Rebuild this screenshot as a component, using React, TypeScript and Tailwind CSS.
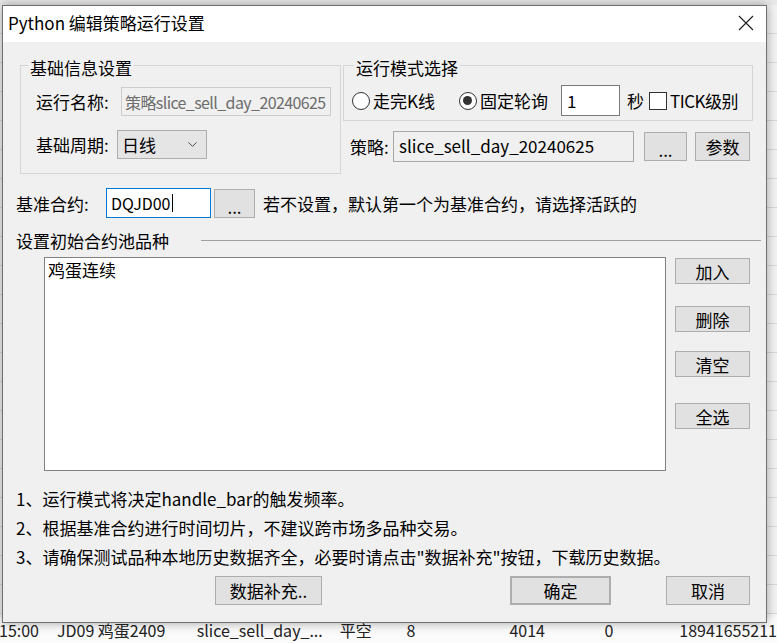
import React from "react";
import { ChevronDown } from "lucide-react";

const Btn = ({ children, className = "" }: { children: React.ReactNode; className?: string }) => (
  <div
    className={`flex shrink-0 items-center justify-center border border-[#adadad] bg-[#e1e1e1] text-[17px] leading-none text-black ${className}`}
  >
    {children}
  </div>
);

const Radio = ({ checked }: { checked?: boolean }) => (
  <span className="flex h-[18px] w-[18px] shrink-0 items-center justify-center rounded-full border border-[#333] bg-white">
    {checked && <span className="h-[9px] w-[9px] rounded-full bg-[#333]" />}
  </span>
);

const rows = Array.from({ length: 21 });

const App = () => {
  return (
    <div className="relative h-[643px] w-[777px] overflow-hidden bg-[#f7f7f7] font-['Noto_Sans_CJK_SC','Noto_Sans',sans-serif] text-black">
      {/* table behind the dialog */}
      <div className="flex h-full flex-col">
        <div className="h-[5px] shrink-0 bg-[#e9e9e9]" />
        {rows.map((_, i) => (
          <div key={i} className="h-[29px] shrink-0 border-b border-[#d9d9d9] bg-[#f3f3f3]" />
        ))}
        <div className="flex-1" />
        <div className="flex h-[26px] shrink-0 items-center whitespace-nowrap bg-[#fbfbfb] text-[16px] leading-none text-[#222]">
          <span className="ml-[-1px] w-[58px]">15:00</span>
          <span className="w-[140px]">JD09 鸡蛋2409</span>
          <span className="w-[143px]">slice_sell_day_...</span>
          <span className="w-[67px]">平空</span>
          <span className="w-[103px]">8</span>
          <span className="w-[95px]">4014</span>
          <span className="w-[75px]">0</span>
          <span>18941655211</span>
        </div>
      </div>

      {/* dialog */}
      <div className="absolute left-[2px] top-[5px] flex h-[618px] w-[765px] flex-col border border-[#6f6f6f] bg-[#f0f0f0] shadow-[0_0_10px_rgba(0,0,0,0.35)]">
        <div className="flex h-[36px] shrink-0 items-center justify-between bg-white pb-[4px] pl-[5px] pr-[12px]">
          <span className="text-[17px] leading-none">Python 编辑策略运行设置</span>
          <svg width="16" height="16" viewBox="0 0 16 16" className="mt-[2px]">
            <path d="M1 1 L15 15 M15 1 L1 15" stroke="#222" strokeWidth="1.2" fill="none" />
          </svg>
        </div>

        <div className="flex flex-col text-[17px] leading-none">
          {/* top groups */}
          <div className="mt-[23px] flex items-start">
            <div className="ml-[17px] flex w-[321px] flex-col border border-[#d5d5d5] pb-[14px] pl-[15px]">
              <div className="ml-[-8px] mt-[-9px] w-fit bg-[#f0f0f0] px-[2px] leading-[22px]">基础信息设置</div>
              <div className="mt-[8px] flex h-[29px] items-center">
                <span className="w-[85px]">运行名称:</span>
                <div className="flex h-[29px] w-[210px] items-center overflow-hidden whitespace-nowrap border border-[#cccccc] bg-[#f0f0f0] pl-[3px] text-[16px] tracking-[-0.6px] text-[#6d6d6d]">
                  策略slice_sell_day_20240625
                </div>
              </div>
              <div className="mt-[14px] flex h-[29px] items-center">
                <span className="w-[81px]">基础周期:</span>
                <div className="flex h-[29px] w-[90px] items-center justify-between border border-[#adadad] bg-[#e5e5e5] pl-[4px] pr-[6px]">
                  <span>日线</span>
                  <ChevronDown size={15} strokeWidth={1.4} color="#333" />
                </div>
              </div>
            </div>

            <div className="ml-[2px] flex w-[410px] flex-col">
              <div className="flex flex-col border border-[#d5d5d5] pb-[4px] pl-[8px]">
                <div className="ml-[2px] mt-[-9px] w-fit bg-[#f0f0f0] px-[2px] leading-[22px]">运行模式选择</div>
                <div className="mt-[6px] flex h-[31px] items-center whitespace-nowrap">
                  <Radio />
                  <span className="ml-[3px]">走完K线</span>
                  <span className="ml-[24px]" />
                  <Radio checked />
                  <span className="ml-[3px]">固定轮询</span>
                  <div className="ml-[13px] flex h-[31px] w-[59px] items-center border border-[#7a7a7a] bg-white pl-[5px]">
                    1
                  </div>
                  <span className="ml-[7px]">秒</span>
                  <span className="ml-[5px] h-[18px] w-[18px] shrink-0 border border-[#333] bg-white" />
                  <span className="ml-[3px] tracking-[-0.5px]">TICK级别</span>
                </div>
              </div>
              <div className="ml-[7px] mt-[10px] flex items-center">
                <span className="w-[43px]">策略:</span>
                <div className="flex h-[31px] w-[241px] items-center border border-[#a8a8a8] bg-[#f0f0f0] pb-[3px] pl-[5px]">
                  slice_sell_day_20240625
                </div>
                <Btn className="ml-[10px] h-[29px] w-[43px] pt-[6px] text-[14px]">...</Btn>
                <Btn className="ml-[8px] h-[29px] w-[55px]">参数</Btn>
              </div>
            </div>
          </div>

          {/* base contract */}
          <div className="mt-[14px] flex items-center pl-[13px] whitespace-nowrap">
            <span className="w-[90px]">基准合约:</span>
            <div className="flex h-[30px] w-[105px] items-center border border-[#0078d7] bg-white pl-[4px] text-[16px]">
              DQJD00
              <span className="ml-[1px] h-[18px] w-[1px] bg-black" />
            </div>
            <Btn className="ml-[3px] h-[29px] w-[41px] pt-[6px] text-[14px]">...</Btn>
            <span className="ml-[8px]">若不设置，默认第一个为基准合约，请选择活跃的</span>
          </div>

          {/* pool header */}
          <div className="mt-[11px] flex h-[22px] items-center pl-[13px]">
            <span>设置初始合约池品种</span>
            <div className="ml-[32px] h-[1px] w-[560px] bg-[#a0a0a0]" />
          </div>

          {/* pool list */}
          <div className="mt-[6px] flex items-start">
            <div className="ml-[41px] h-[214px] w-[622px] border border-[#828282] bg-white pl-[3px] pt-[1px]">
              <div className="leading-[22px]">鸡蛋连续</div>
            </div>
            <div className="ml-[9px] flex flex-col">
              <Btn className="mt-[1px] h-[26px] w-[75px]">加入</Btn>
              <Btn className="mt-[22px] h-[26px] w-[75px]">删除</Btn>
              <Btn className="mt-[19px] h-[26px] w-[75px]">清空</Btn>
              <Btn className="mt-[26px] h-[26px] w-[75px]">全选</Btn>
            </div>
          </div>

          {/* notes */}
          <div className="mt-[13px] flex flex-col pl-[13px] leading-[29px] whitespace-nowrap">
            <span>1、运行模式将决定handle_bar的触发频率。</span>
            <span>2、根据基准合约进行时间切片，不建议跨市场多品种交易。</span>
            <span>3、请确保测试品种本地历史数据齐全，必要时请点击"数据补充"按钮，下载历史数据。</span>
          </div>

          {/* footer buttons */}
          <div className="mt-[5px] flex items-center">
            <Btn className="ml-[212px] h-[29px] w-[107px]">数据补充..</Btn>
            <Btn className="ml-[188px] h-[29px] w-[101px] border-2 border-[#0078d7]">确定</Btn>
            <Btn className="ml-[55px] h-[29px] w-[84px]">取消</Btn>
          </div>
        </div>
      </div>
    </div>
  );
};

export default App;
